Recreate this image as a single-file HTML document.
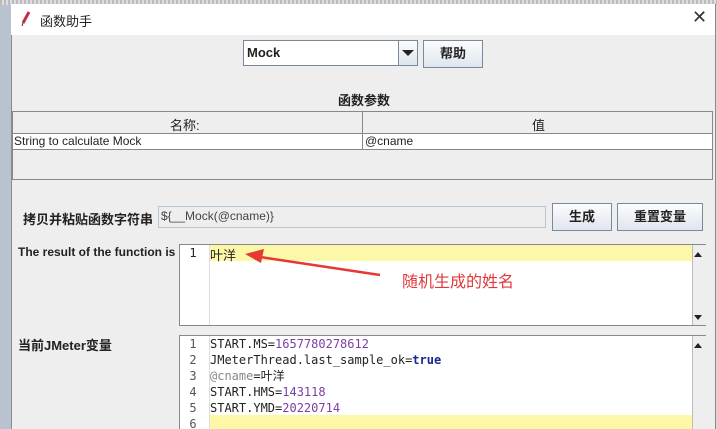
<!DOCTYPE html>
<html><head><meta charset="utf-8"><style>
html,body{margin:0;width:717px;height:429px;overflow:hidden}
body{background:#d8d8d8;position:relative;font-family:"Liberation Sans","Noto Sans CJK SC",sans-serif;font-size:12px;color:#222}
.a{position:absolute}
.win{left:11px;top:4px;width:703px;height:430px;background:#eeeeee;border:1px solid #8a8a8a}
.title{left:11px;top:4px;width:704px;height:31px;background:#fff}
.btn{border:1px solid #7a8a9c;background:linear-gradient(#fbfcfd,#dfe6ee);font-weight:bold;font-size:13px;text-align:center;box-sizing:border-box}
.mono{font-family:"DejaVu Sans Mono","Noto Sans CJK SC",monospace;font-size:12px}
.ln{color:#555;width:26px;text-align:center}
.sb{background:#eee;border-left:1px solid #bbb}
</style></head><body>
<div class="a" style="left:0;top:0;width:717px;height:5px;background:repeating-linear-gradient(90deg,#bbb 0 2px,#ddd 2px 4px)"></div>
<div class="a" style="left:0;top:5px;width:11px;height:424px;background:#b9c3cf"></div>
<div class="a win"></div>
<div class="a title"></div>
<svg class="a" style="left:20px;top:11px" width="12" height="16"><path d="M9 1 L3 12" stroke="#c0304a" stroke-width="3"/><path d="M3 12 L2 15" stroke="#333" stroke-width="1"/></svg>
<div class="a" style="left:40px;top:11px;font-size:13px">函数助手</div>
<div class="a" style="left:692px;top:7px;font-size:18px;color:#333">✕</div>
<div class="a" style="left:243px;top:40px;width:174px;height:26px;background:#fff;border:1px solid #7a8796;box-sizing:border-box"></div>
<div class="a" style="left:247px;top:45px;font-weight:bold;font-size:13px">Mock</div>
<div class="a btn" style="left:398px;top:40px;width:20px;height:26px"></div>
<div class="a" style="left:402px;top:50px;border-left:6px solid transparent;border-right:6px solid transparent;border-top:6px solid #222"></div>
<div class="a btn" style="left:423px;top:40px;width:60px;height:28px;line-height:26px">帮助</div>
<div class="a" style="left:338px;top:90px;font-weight:bold;font-size:13px">函数参数</div>
<div class="a" style="left:12px;top:111px;width:701px;height:69px;border:1px solid #888;box-sizing:border-box"></div>
<div class="a" style="left:13px;top:112px;width:699px;height:21px;background:#eee;border-bottom:1px solid #888"></div>
<div class="a" style="left:13px;top:134px;width:699px;height:15px;background:#fff;border-bottom:1px solid #888"></div>
<div class="a" style="left:362px;top:112px;width:1px;height:38px;background:#888"></div>
<div class="a" style="left:170px;top:115px;font-size:13px">名称:</div>
<div class="a" style="left:532px;top:115px;font-size:13px">值</div>
<div class="a" style="left:14px;top:134px">String to calculate Mock</div>
<div class="a" style="left:365px;top:134px">@cname</div>
<div class="a" style="left:23px;top:209px;font-weight:bold;font-size:13px">拷贝并粘贴函数字符串</div>
<div class="a" style="left:158px;top:206px;width:388px;height:22px;border:1px solid #b8c6d4;box-sizing:border-box"></div>
<div class="a" style="left:161px;top:209px;color:#444">${__Mock(@cname)}</div>
<div class="a btn" style="left:552px;top:203px;width:60px;height:28px;line-height:26px">生成</div>
<div class="a btn" style="left:617px;top:203px;width:86px;height:28px;line-height:26px">重置变量</div>
<div class="a" style="left:18px;top:245px;font-weight:bold">The result of the function is</div>
<div class="a" style="left:179px;top:244px;width:527px;height:82px;background:#fff;border:1px solid #888;box-sizing:border-box"></div>
<div class="a" style="left:210px;top:245px;width:482px;height:16px;background:#fdf8a8"></div>
<div class="a" style="left:209px;top:245px;width:1px;height:80px;background:#ddd"></div>
<div class="a sb" style="left:692px;top:245px;width:13px;height:80px"></div>
<div class="a" style="left:694px;top:252px;border-left:4px solid transparent;border-right:4px solid transparent;border-bottom:5px solid #222"></div>
<div class="a" style="left:694px;top:315px;border-left:4px solid transparent;border-right:4px solid transparent;border-top:5px solid #222"></div>
<div class="a mono ln" style="left:180px;top:246px;color:#223">1</div>
<div class="a mono" style="left:210px;top:245px;font-size:13px">叶洋</div>
<div class="a" style="left:18px;top:335px;font-weight:bold;font-size:13px">当前JMeter变量</div>
<div class="a" style="left:179px;top:335px;width:527px;height:100px;background:#fff;border:1px solid #888;box-sizing:border-box"></div>
<div class="a" style="left:210px;top:415px;width:482px;height:16px;background:#fdf8a8"></div>
<div class="a" style="left:209px;top:336px;width:1px;height:95px;background:#ddd"></div>
<div class="a sb" style="left:692px;top:336px;width:13px;height:95px"></div>
<div class="a" style="left:694px;top:343px;border-left:4px solid transparent;border-right:4px solid transparent;border-bottom:5px solid #222"></div>
<div class="a mono" style="left:180px;top:336px;line-height:16px">
<div class="ln">1</div><div class="ln">2</div><div class="ln">3</div><div class="ln">4</div><div class="ln">5</div><div class="ln">6</div></div>
<div class="a mono" style="left:210px;top:336px;line-height:16px;color:#222;white-space:pre">START.MS=<span style="color:#7a3fa8">1657780278612</span>
JMeterThread.last_sample_ok=<b style="color:#1a2a8a">true</b>
<span style="color:#888">@cname</span>=叶洋
START.HMS=<span style="color:#7a3fa8">143118</span>
START.YMD=<span style="color:#7a3fa8">20220714</span></div>
<svg class="a" style="left:240px;top:245px" width="150" height="40"><path d="M140 30 L20 12" stroke="#e53935" stroke-width="2.5"/><path d="M5 9 L24 4 L21 18 Z" fill="#e53935"/></svg>
<div class="a" style="left:402px;top:268px;color:#e0393b;font-size:16px">随机生成的姓名</div>
</body></html>
